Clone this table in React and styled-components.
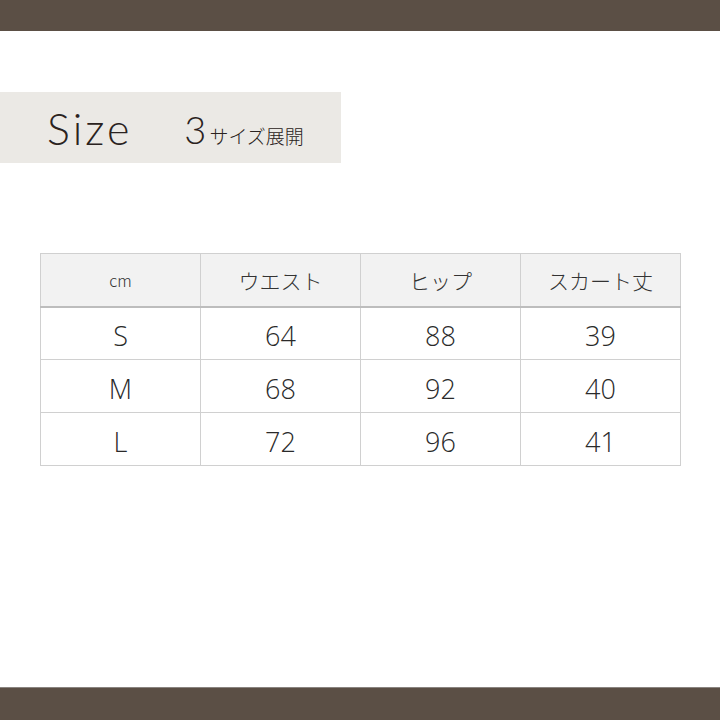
import styled, { createGlobalStyle } from "styled-components";

const GlobalStyle = createGlobalStyle`
    html, body { margin: 0; padding: 0; background: #fff; }
    body { font-family: "Noto Sans CJK JP", "Noto Sans", sans-serif; }
`;

const Page = styled.div`
    width: 720px;
    height: 720px;
    display: flex;
    flex-direction: column;
    overflow: hidden;
`;
const Bar = styled.div`
    height: ${(p) => p.$h}px;
    background: #5b4f45;
    flex-shrink: 0;
`;
const BottomBar = styled(Bar)`
    margin-top: auto;
    border-top: 1px solid #8a8480;
`;
const Banner = styled.div`
    margin-top: 61px;
    width: 341px;
    height: 71px;
    background: #ebe9e5;
    display: flex;
    align-items: center;
    box-sizing: border-box;
    padding-left: 47px;
    padding-top: 2px;
`;
const Title = styled.span`
    font-family: "Lato", sans-serif;
    font-weight: 300;
    font-size: 43px;
    color: #2a2220;
    letter-spacing: 3px;
`;
const Sub = styled.span`
    margin-left: 52px;
    display: flex;
    align-items: baseline;
    color: #2a2220;
`;
const Num = styled.span`
    font-family: "Lato", sans-serif;
    font-weight: 300;
    font-size: 38px;
`;
const SubText = styled.span`
    font-family: "Noto Sans CJK JP", sans-serif;
    font-weight: 300;
    font-size: 19px;
    margin-left: 3px;
`;
const Table = styled.table`
    margin: 90px 0 0 40px;
    border-collapse: collapse;
    width: 641px;
    table-layout: fixed;
`;
const Th = styled.th`
    height: 53px;
    background: #f2f2f2;
    border: 1px solid #d0d0d0;
    border-bottom: 2px solid #bdbdbd;
    font-weight: 300;
    font-size: ${(p) => (p.$small ? 16 : 21)}px;
    color: #333;
    text-align: center;
    padding: 0;
    box-sizing: border-box;
`;
const Td = styled.td`
    height: 53px;
    border: 1px solid #d0d0d0;
    font-family: "Open Sans", sans-serif;
    font-weight: 300;
    font-size: 27px;
    color: #2a2a2a;
    text-align: center;
    padding: 4px 0 0;
    box-sizing: border-box;
`;

const rows = [
    ["S", "64", "88", "39"],
    ["M", "68", "92", "40"],
    ["L", "72", "96", "41"],
];

function App() {
    return (
        <Page>
            <GlobalStyle />
            <Bar $h={31} />
            <Banner>
                <Title>Size</Title>
                <Sub>
                    <Num>3</Num>
                    <SubText>サイズ展開</SubText>
                </Sub>
            </Banner>
            <Table>
                <thead>
                    <tr>
                        <Th $small>cm</Th>
                        <Th>ウエスト</Th>
                        <Th>ヒップ</Th>
                        <Th>スカート丈</Th>
                    </tr>
                </thead>
                <tbody>
                    {rows.map((r) => (
                        <tr key={r[0]}>
                            {r.map((c, i) => (
                                <Td key={i}>{c}</Td>
                            ))}
                        </tr>
                    ))}
                </tbody>
            </Table>
            <BottomBar $h={32} />
        </Page>
    );
}

export default App;
